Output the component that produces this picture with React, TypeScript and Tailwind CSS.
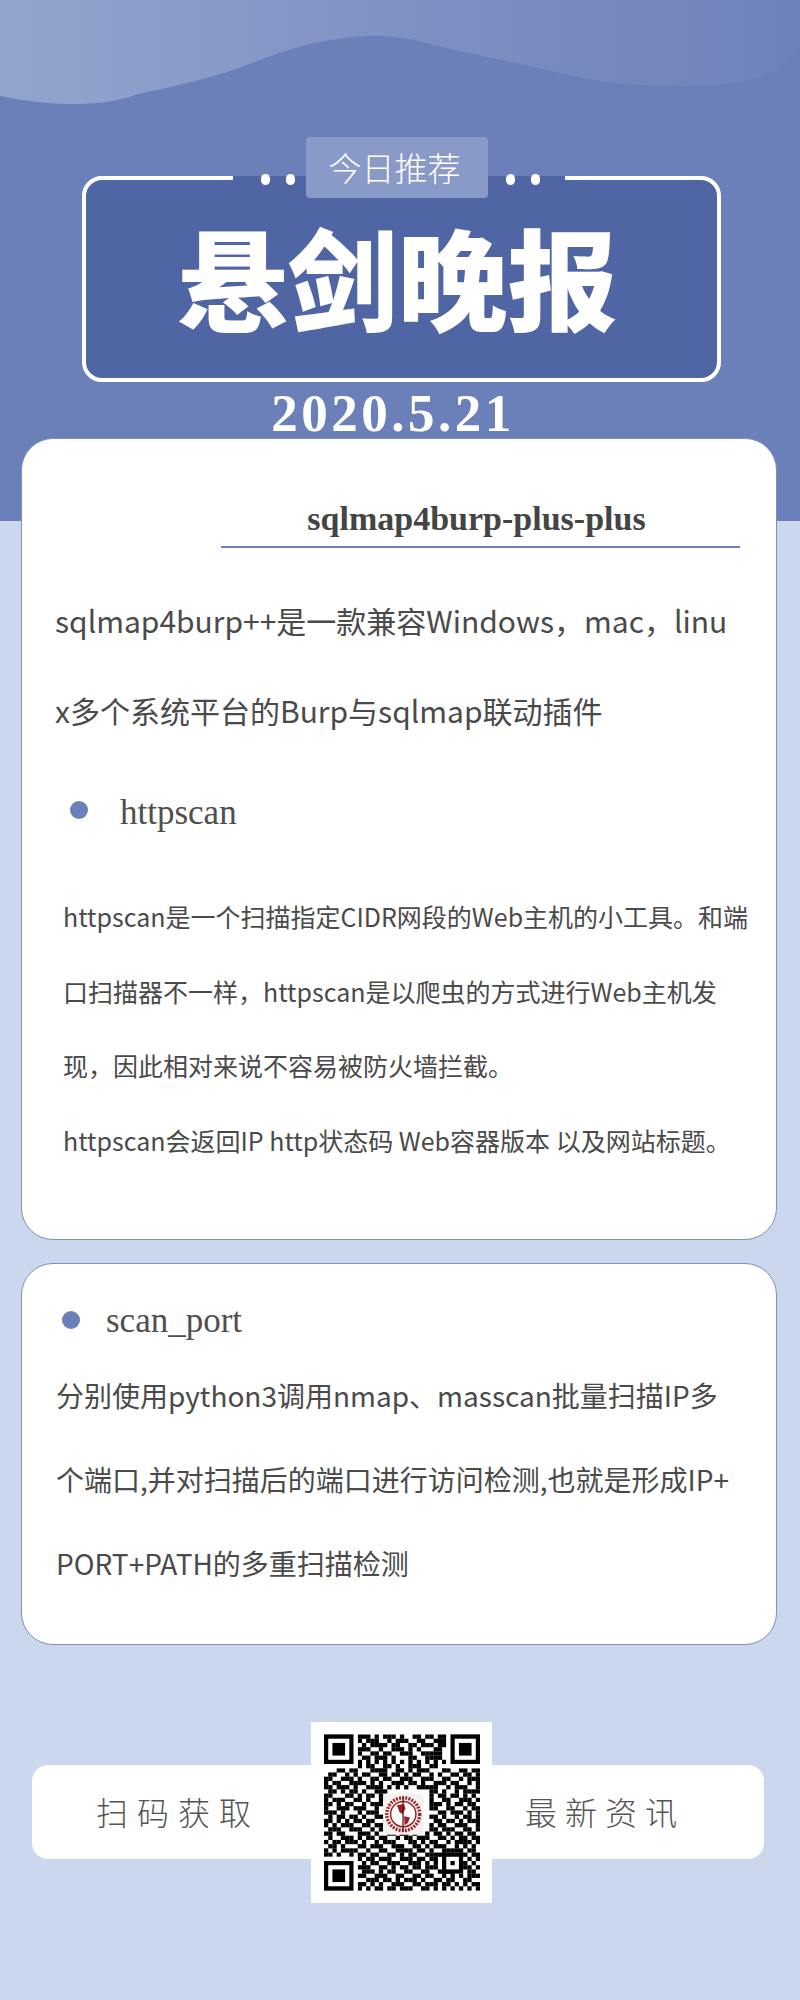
const sans = { fontFamily: '"Noto Sans CJK SC",sans-serif' };
const serif = { fontFamily: '"Liberation Serif","Noto Sans CJK SC",serif' };

// rough transcription of the code, finders are drawn on top separately
const qrRows = [
  '1111111011101011101001101101101111111',
  '1000001010111001011100110011101000001',
  '1011101001011110110011011101101011101',
  '1011101011100100111010100011001011101',
  '1011101010011011001110011111001011101',
  '1000001001101110100011001111001000001',
  '1111111010101010101010101010101111111',
  '0000000010110011010011100110000000000',
  '0001101100011110011010111000110011011',
  '0110010101100110110101100101001101101',
  '1100111010011011001110011100110010111',
  '1011001111010100111011010011101100101',
  '1101110100111101010100111110010111001',
  '0110101101001110000000000110100101111',
  '1100011010110100000000000101101101010',
  '1011100110100110000000000100110011101',
  '1101011001011100000000000111010110110',
  '1001110111001010000000000110011001011',
  '1110100010111000000000000001101110101',
  '0101101101001110000000000110100101101',
  '1101010110110010000000000011011010111',
  '1010111001101110000000000101100111001',
  '0111001110010101000000000110111001101',
  '1101100011101001101101001011010110110',
  '0100111010110110010110111001101011011',
  '1011011101001011100011010110010111101',
  '0110100011011100111001101011100101010',
  '1010111100100110011110110100111110110',
  '1101001011011001101011001111101011011',
  '0000000010110111001110110110001100101',
  '1111111001011001110011101010101011010',
  '1000001011100110101101101110001101101',
  '1011101001110101100110011001111000110',
  '1011101011001110011001101100101010111',
  '1011101000111011010111010011011001100',
  '1000001011010100111001101110110101011',
  '1111111010101101101110011010101010101',
];

function Finder({ x, y }: { x: number; y: number }) {
  return (
    <g>
      <rect x={x} y={y} width={7} height={7} fill="#000" />
      <rect x={x + 1} y={y + 1} width={5} height={5} fill="#fff" />
      <rect x={x + 2} y={y + 2} width={3} height={3} fill="#000" />
    </g>
  );
}

function QrCode() {
  return (
    <svg viewBox="0 0 37 37" className="w-[156px] h-[157px]">
      {qrRows.map((row, y) =>
        row.split('').map((c, x) =>
          c === '1' ? <rect key={`${x}-${y}`} x={x} y={y} width={1.02} height={1.02} fill="#000" /> : null
        )
      )}
      <rect x={0} y={0} width={8} height={8} fill="#fff" />
      <rect x={29} y={0} width={8} height={8} fill="#fff" />
      <rect x={0} y={29} width={8} height={8} fill="#fff" />
      <Finder x={0} y={0} />
      <Finder x={30} y={0} />
      <Finder x={0} y={30} />
      <rect x={28} y={28} width={5} height={5} fill="#000" />
      <rect x={29} y={29} width={3} height={3} fill="#fff" />
      <rect x={30} y={30} width={1} height={1} fill="#000" />
      {/* logo in the middle */}
      <g transform="translate(14 14)">
        <rect x={0} y={0} width={9.6} height={9.8} rx={1.2} fill="#f4f1ee" />
        <circle cx={4.8} cy={4.9} r={3} fill="#fff" stroke="#a01f24" strokeWidth={0.35} />
        <circle cx={4.8} cy={4.9} r={3.9} fill="none" stroke="#a01f24" strokeWidth={0.8} strokeDasharray="0.45 0.3" />
        <path d="M3.3 2.8 L5 2.5 L5.3 3.6 L4.6 4.9 L3.9 4.4 Z" fill="#a01f24" />
        <path d="M5 5.4 L6.4 5.7 L5.9 7 L5.1 7.5 Z" fill="#a01f24" />
        <rect x={4.6} y={1} width={0.3} height={8} fill="#5a1216" />
      </g>
    </svg>
  );
}

export default function App() {
  return (
    <div className="w-[800px] h-[2000px] bg-[#cad7ec] overflow-hidden" style={sans}>
      {/* header */}
      <div className="relative h-[521px] bg-[#6b80b9] pt-[176px]">
        <svg className="absolute top-0 left-0" width="800" height="110" viewBox="0 0 800 110">
          <defs>
            <linearGradient id="wave" x1="0" y1="0" x2="1" y2="0">
              <stop offset="0" stopColor="#93a5cd" />
              <stop offset="0.5" stopColor="#7f90c3" />
              <stop offset="1" stopColor="#6d82ba" />
            </linearGradient>
          </defs>
          <path
            d="M0 0 H800 V50 C780 72 760 82 715 85 C660 88 610 85 560 73 C510 61 470 54 434 45 C405 37 385 35 367 36 C325 38 290 48 255 62 C215 78 175 86 138 94 C115 103 90 104 70 104 C45 104 20 100 0 96 Z"
            fill="url(#wave)"
          />
        </svg>

        <div className="relative ml-[82px] w-[639px] h-[206px] rounded-[20px] border-4 border-white bg-[#5065a4] flex items-center justify-center">
          <span className="absolute -top-[4px] left-[147px] w-[332px] h-[4px] bg-[#5065a4]" />
          <span className="absolute -top-[6px] left-[175px] w-[9px] h-[11px] rounded-full bg-white" />
          <span className="absolute -top-[6px] left-[200px] w-[9px] h-[11px] rounded-full bg-white" />
          <span className="absolute -top-[6px] left-[420px] w-[9px] h-[11px] rounded-full bg-white" />
          <span className="absolute -top-[6px] left-[445px] w-[9px] h-[11px] rounded-full bg-white" />
          <div className="absolute -top-[43px] left-[220px] w-[182px] h-[61px] rounded-[4px] bg-[#8a9ac8] flex items-center justify-center pr-[5px] text-[33px] font-light text-white">
            今日推荐
          </div>
          <h1 className="text-[110px] leading-none font-black text-white mt-[14px] mr-[8px]" style={serif}>
            悬剑晚报
          </h1>
        </div>
        <p className="mt-[1px] pr-[14px] text-center text-[53px] leading-[60px] font-bold tracking-[3.5px] text-white" style={serif}>
          2020.5.21
        </p>
      </div>

      {/* card 1 */}
      <div className="relative -mt-[83px] ml-[21px] w-[756px] h-[802px] rounded-[32px] bg-white border border-[#7e90c0] pt-[61px]">
        <h2 className="ml-[199px] w-[519px] pr-2 pb-[8px] border-b-2 border-[#6b80b9] text-center text-[34px] leading-[38px] font-bold text-[#444]" style={serif}>
          sqlmap4burp-plus-plus
        </h2>
        <p className="mt-[27px] ml-[33px] text-[30px] leading-[90px] text-[#4a4a4a]">
          sqlmap4burp++是一款兼容Windows，mac，linu
          <br />
          x多个系统平台的Burp与sqlmap联动插件
        </p>
        <div className="mt-[38px] ml-[48px] flex items-center gap-[32px] text-[35px] leading-[40px] text-[#4f4f4f]" style={serif}>
          <span className="w-[18px] h-[18px] rounded-full bg-[#6b80b9] shrink-0 -mt-[6px]" />
          <span>httpscan</span>
        </div>
        <p className="mt-[46px] ml-[41px] text-[25px] leading-[74.5px] text-[#4a4a4a]">
          httpscan是一个扫描指定CIDR网段的Web主机的小工具。和端
          <br />
          口扫描器不一样，httpscan是以爬虫的方式进行Web主机发
          <br />
          现，因此相对来说不容易被防火墙拦截。
          <br />
          httpscan会返回IP http状态码 Web容器版本 以及网站标题。
        </p>
      </div>

      {/* card 2 */}
      <div className="ml-[21px] w-[756px] mt-[23px] h-[382px] rounded-[32px] bg-white border border-[#7e90c0] pt-[37px]">
        <div className="ml-[40px] flex items-center gap-[26px] text-[35px] leading-[40px] text-[#4f4f4f]" style={serif}>
          <span className="w-[18px] h-[18px] rounded-full bg-[#6b80b9] shrink-0 -mt-[2px]" />
          <span>scan_port</span>
        </div>
        <p className="mt-[12px] ml-[34px] text-[28px] leading-[84px] text-[#4a4a4a]">
          分别使用python3调用nmap、masscan批量扫描IP多
          <br />
          个端口,并对扫描后的端口进行访问检测,也就是形成IP+
          <br />
          PORT+PATH的多重扫描检测
        </p>
      </div>

      {/* footer */}
      <div className="ml-[32px] w-[732px] mt-[120px] h-[94px] rounded-[16px] bg-white flex items-center">
        <div className="w-[279px] pl-[64px] -mt-[3px] text-[32px] tracking-[9px] font-light text-[#555]">扫码获取</div>
        <div className="w-[181px] h-[181px] shrink-0 bg-white flex items-center justify-center">
          <QrCode />
        </div>
        <div className="pl-[33px] -mt-[3px] text-[32px] tracking-[8px] font-light text-[#555]">最新资讯</div>
      </div>
    </div>
  );
}
